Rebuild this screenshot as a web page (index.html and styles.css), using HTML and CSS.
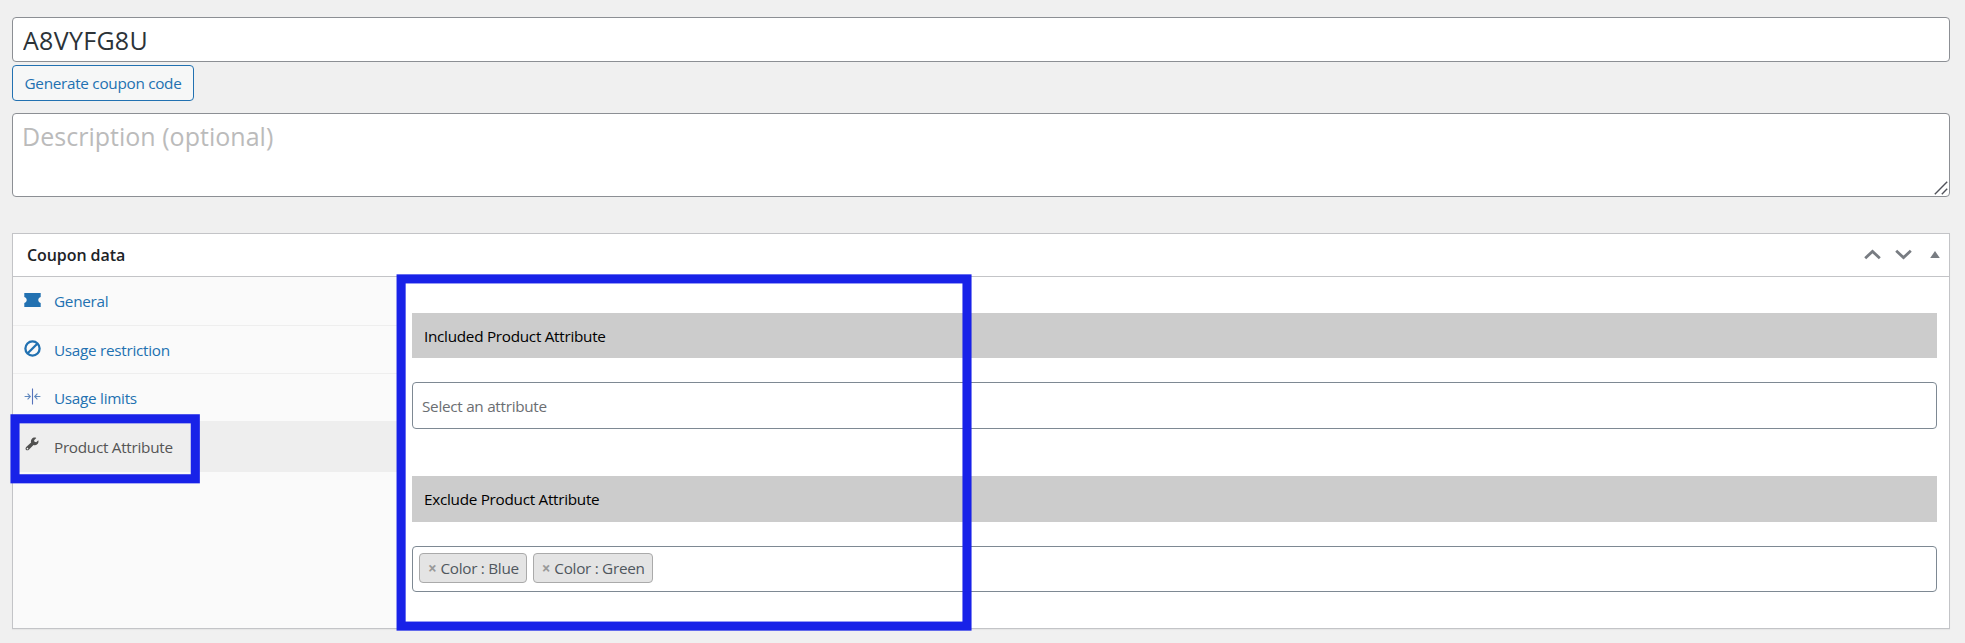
FILE: index.html
```html
<!DOCTYPE html>
<html lang="en">
<head>
<meta charset="utf-8">
<title>Edit coupon</title>
<link rel="stylesheet" href="styles.css">
</head>
<body>
<main class="page">
  <input class="coupon-code" type="text" value="A8VYFG8U" aria-label="Coupon code">
  <button class="generate" type="button">Generate coupon code</button>
  <div class="description-wrap">
    <textarea class="description" placeholder="Description (optional)"></textarea>
    <svg class="grip" width="14" height="14" viewBox="0 0 14 14"><path d="M.8 13.2 13.2.8M7.8 13.2l5.4-5.4" fill="none" stroke="#50525a" stroke-width="1.4"/></svg>
  </div>

  <section class="panel">
    <header class="panel-header">
      <h2 class="panel-title">Coupon data</h2>
      <div class="panel-actions">
        <svg width="17" height="11" viewBox="0 0 17 11"><path d="M1.2 9.2 8.5 2.4l7.3 6.8" fill="none" stroke="#787c82" stroke-width="2.8"/></svg>
        <svg width="17" height="11" viewBox="0 0 17 11"><path d="M1.2 1.8 8.5 8.6l7.3-6.8" fill="none" stroke="#787c82" stroke-width="2.8"/></svg>
        <svg class="toggle" width="10" height="7" viewBox="0 0 10 7"><path d="M5 0 9.8 7H.2z" fill="#787c82"/></svg>
      </div>
    </header>
    <div class="panel-body">
      <nav class="tabs">
        <a class="tab tab-first">
          <svg class="tab-icon" width="17" height="16" viewBox="0 0 17 16"><path d="M.3 1h16.4v4.1c-1.6.5-2.4 1.6-2.4 2.9s.8 2.4 2.4 2.900V15H.3v-4.100c1.600-.5 2.400-1.600 2.400-2.900S1.900 5.600.3 5.100z" fill="#2271b1"/></svg>
          General
        </a>
        <a class="tab">
          <svg class="tab-icon" width="17" height="17" viewBox="0 0 17 17"><g fill="none" stroke="#2271b1" stroke-width="2.3"><circle cx="8.5" cy="8.5" r="7.1"/><path d="M3.700 13.300 13.300 3.700"/></g></svg>
          Usage restriction
        </a>
        <a class="tab">
          <svg class="tab-icon" width="17" height="17" viewBox="0 0 17 17"><g fill="none" stroke="#5f87bd" stroke-width="1.1"><path d="M8.5.5v16" stroke="#5673bb"/><path d="M.6 8.500h5.600M3.600 5.700l2.700 2.800-2.700 2.800M16.400 8.500h-5.600M13.400 5.700l-2.700 2.800 2.700 2.800"/></g></svg>
          Usage limits
        </a>
        <a class="tab tab-active">
          <svg class="tab-icon tab-icon-wrench" width="17" height="17" viewBox="0 0 17 17"><path d="M14.300 4.200 12.200 6.300l-1.700-.5-.4-1.600 2.200-2.300c-1.700-.6-3.500-.2-4.500 1-.9 1-1.100 2.200-.7 3.500L2.200 11c-.8.8-.9 2-.2 2.800.8.8 2.100.7 2.800-.1l4.700-4.800c1.400.5 2.700.2 3.700-.7 1.200-1 1.600-2.500 1.100-4zM3.400 13.400a.8.8 0 1 1 .1-1.600.8.8 0 0 1-.1 1.600z" fill="#50504f"/></svg>
          Product Attribute
        </a>
      </nav>
      <div class="fields">
        <h3 class="bar">Included Product Attribute</h3>
        <div class="select select-empty">Select an attribute</div>
        <h3 class="bar bar-exclude">Exclude Product Attribute</h3>
        <div class="select select-filled">
          <span class="tag"><span class="tag-x">×</span>Color : Blue</span>
          <span class="tag"><span class="tag-x">×</span>Color : Green</span>
        </div>
      </div>
    </div>
  </section>
</main>

<svg class="highlights" width="1965" height="643" viewBox="0 0 1965 643">
  <g fill="none" stroke="#1822e8" stroke-width="9.1">
    <rect x="15" y="418.8" width="180.3" height="60"/>
    <rect x="401.1" y="278.9" width="565.9" height="347.2"/>
  </g>
</svg>
</body>
</html>
```

FILE: styles.css
```css
* { box-sizing: border-box; }

body {
  margin: 0;
  background: #f0f0f0;
  color: #1d2327;
  font: 15.3px/24px "Open Sans", "Noto Sans", sans-serif;
  letter-spacing: -0.29px;
}

.page {
  display: flex;
  flex-direction: column;
  height: 643px;
  padding: 17px 15px 13px 12px;
}

.coupon-code {
  height: 45px;
  padding: 0 10px;
  border: 1px solid #8c8f94;
  border-radius: 4px;
  background: #fff;
  color: #2c3338;
  font: 25px/35px "Open Sans", "Noto Sans", sans-serif;
  letter-spacing: 0.3px;
}

.generate {
  align-self: flex-start;
  width: 182px;
  height: 36px;
  margin-top: 3px;
  padding: 0;
  border: 1px solid #2271b1;
  border-radius: 4px;
  background: #f6f7f7;
  color: #2271b1;
  font: inherit;
  letter-spacing: inherit;
}

.description-wrap {
  position: relative;
  height: 84px;
  margin-top: 12px;
}

.description {
  display: block;
  width: 100%;
  height: 100%;
  padding: 5px 9px;
  border: 1px solid #8c8f94;
  border-radius: 4px;
  background: #fff;
  font: 25px/35px "Open Sans", "Noto Sans", sans-serif;
  letter-spacing: 0.02px;
  resize: none;
}

.description::placeholder { color: #bbb; opacity: 1; }

.grip {
  position: absolute;
  right: 2px;
  bottom: 2px;
}

.panel {
  display: flex;
  flex-direction: column;
  height: 396px;
  margin-top: 36px;
  border: 1px solid #c3c4c7;
  background: #fff;
  box-shadow: 0 1px 1px rgba(0, 0, 0, 0.04);
}

.panel-header {
  display: flex;
  flex: none;
  align-items: center;
  justify-content: space-between;
  height: 43px;
  padding: 0 9px 0 14px;
  border-bottom: 1px solid #c3c4c7;
}

.panel-title {
  margin: 0;
  font-size: 16px;
  font-weight: 600;
  letter-spacing: -0.08px;
}

.panel-actions {
  display: flex;
  align-items: center;
  gap: 14px;
  margin-bottom: 2px;
}

.toggle { margin-left: 4px; }

.panel-body { display: flex; flex: 1; }

.tabs {
  flex: none;
  width: 384px;
  background: #fafafa;
}

.tab {
  display: flex;
  align-items: center;
  height: 48px;
  padding-left: 11px;
  border-bottom: 1px solid #eee;
  color: #2271b1;
}

.tab-first { height: 49px; }

.tab-active {
  height: 50px;
  background: #eee;
  color: #555;
}

.tab-icon { margin: 0 13px 2px 0; }
.tab-icon-wrench { margin-bottom: 4px; }

.fields {
  flex: 1;
  padding: 36px 12px 0 15px;
}

.bar {
  height: 45px;
  margin: 0;
  padding: 0 12px;
  background: #ccc;
  color: #000;
  font-size: inherit;
  font-weight: 400;
  line-height: 46px;
}

.bar-exclude { height: 46px; margin-top: 47px; }

.select {
  display: flex;
  height: 47px;
  margin-top: 24px;
  border: 1px solid #7e8993;
  border-radius: 4px;
  background: #fff;
}

.select-empty {
  align-items: center;
  padding-left: 9px;
  color: #6b6e72;
}

.select-filled {
  gap: 6px;
  height: 46px;
  padding: 6px;
}

.tag {
  display: flex;
  align-items: center;
  height: 30px;
  padding: 0 7px 0 8px;
  border: 1px solid #aaa;
  border-radius: 4px;
  background: #e4e4e4;
  color: #50575e;
}

.tag-x {
  margin-right: 4px;
  color: #999;
  font-weight: 700;
}

.highlights {
  position: absolute;
  top: 0;
  left: 0;
  pointer-events: none;
}
```
